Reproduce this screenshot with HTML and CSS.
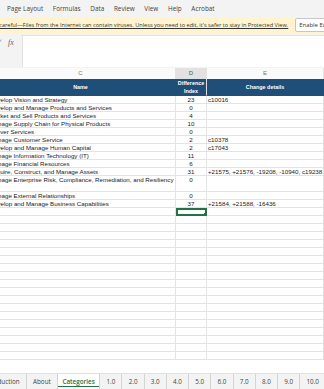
FILE: index.html
```html
<!DOCTYPE html>
<html lang="en">
<head>
    <meta charset="UTF-8">
    <title>Categories</title>
    <link rel="stylesheet" href="styles.css">
</head>
<body>

    <div class="menubar">
        <span>Page Layout</span>
        <span>Formulas</span>
        <span>Data</span>
        <span>Review</span>
        <span>View</span>
        <span>Help</span>
        <span>Acrobat</span>
    </div>

    <div class="msgbar">
        <span class="msg">Be careful—Files from the Internet can contain viruses. Unless you need to edit, it's safer to stay in Protected View.</span>
        <span class="enable">Enable Editing</span>
    </div>

    <div class="formula">
        <div class="fx-tools">
            <span class="check">✓</span>
            <span class="fx">fx</span>
        </div>
        <div class="fx-input"></div>
    </div>

    <div class="colheads">
        <div class="ch c">C</div>
        <div class="ch d">D</div>
        <div class="ch e">E</div>
    </div>

    <div class="sheet">
        <div class="row head">
            <div class="cell c">Name</div>
            <div class="cell d">Difference<br>Index</div>
            <div class="cell e">Change details</div>
        </div>
        <div class="row"><div class="cell c">Develop Vision and Strategy</div><div class="cell d">23</div><div class="cell e">c10016</div></div>
        <div class="row"><div class="cell c">Develop and Manage Products and Services</div><div class="cell d">0</div><div class="cell e"></div></div>
        <div class="row"><div class="cell c">Market and Sell Products and Services</div><div class="cell d">4</div><div class="cell e"></div></div>
        <div class="row"><div class="cell c">Manage Supply Chain for Physical Products</div><div class="cell d">10</div><div class="cell e"></div></div>
        <div class="row"><div class="cell c">Deliver Services</div><div class="cell d">0</div><div class="cell e"></div></div>
        <div class="row"><div class="cell c">Manage Customer Service</div><div class="cell d">2</div><div class="cell e">c10378</div></div>
        <div class="row"><div class="cell c">Develop and Manage Human Capital</div><div class="cell d">2</div><div class="cell e">c17043</div></div>
        <div class="row"><div class="cell c">Manage Information Technology (IT)</div><div class="cell d">11</div><div class="cell e"></div></div>
        <div class="row"><div class="cell c">Manage Financial Resources</div><div class="cell d">6</div><div class="cell e"></div></div>
        <div class="row"><div class="cell c">Acquire, Construct, and Manage Assets</div><div class="cell d">31</div><div class="cell e">+21575, +21576, -19208, -10940, c19238</div></div>
        <div class="row tall"><div class="cell c">Manage Enterprise Risk, Compliance, Remediation, and Resiliency</div><div class="cell d">0</div><div class="cell e"></div></div>
        <div class="row"><div class="cell c">Manage External Relationships</div><div class="cell d">0</div><div class="cell e"></div></div>
        <div class="row"><div class="cell c">Develop and Manage Business Capabilities</div><div class="cell d">37</div><div class="cell e">+21584, +21588, -16436</div></div>
        <div class="row"><div class="cell c"></div><div class="cell d selected"></div><div class="cell e"></div></div>
        <div class="row"><div class="cell c"></div><div class="cell d"></div><div class="cell e"></div></div>
        <div class="row"><div class="cell c"></div><div class="cell d"></div><div class="cell e"></div></div>
        <div class="row"><div class="cell c"></div><div class="cell d"></div><div class="cell e"></div></div>
        <div class="row"><div class="cell c"></div><div class="cell d"></div><div class="cell e"></div></div>
        <div class="row"><div class="cell c"></div><div class="cell d"></div><div class="cell e"></div></div>
        <div class="row"><div class="cell c"></div><div class="cell d"></div><div class="cell e"></div></div>
        <div class="row"><div class="cell c"></div><div class="cell d"></div><div class="cell e"></div></div>
        <div class="row"><div class="cell c"></div><div class="cell d"></div><div class="cell e"></div></div>
        <div class="row"><div class="cell c"></div><div class="cell d"></div><div class="cell e"></div></div>
        <div class="row"><div class="cell c"></div><div class="cell d"></div><div class="cell e"></div></div>
        <div class="row"><div class="cell c"></div><div class="cell d"></div><div class="cell e"></div></div>
        <div class="row"><div class="cell c"></div><div class="cell d"></div><div class="cell e"></div></div>
        <div class="row"><div class="cell c"></div><div class="cell d"></div><div class="cell e"></div></div>
        <div class="row"><div class="cell c"></div><div class="cell d"></div><div class="cell e"></div></div>
        <div class="row"><div class="cell c"></div><div class="cell d"></div><div class="cell e"></div></div>
        <div class="row"><div class="cell c"></div><div class="cell d"></div><div class="cell e"></div></div>
        <div class="row"><div class="cell c"></div><div class="cell d"></div><div class="cell e"></div></div>
        <div class="row"><div class="cell c"></div><div class="cell d"></div><div class="cell e"></div></div>
    </div>

    <div class="tabs">
        <span class="tab first">Introduction</span>
        <span class="tab">About</span>
        <span class="tab active">Categories</span>
        <span class="tab">1.0</span>
        <span class="tab">2.0</span>
        <span class="tab">3.0</span>
        <span class="tab">4.0</span>
        <span class="tab">5.0</span>
        <span class="tab">6.0</span>
        <span class="tab">7.0</span>
        <span class="tab">8.0</span>
        <span class="tab">9.0</span>
        <span class="tab">10.0</span>
    </div>

</body>
</html>
```

FILE: styles.css
```css
body {
    margin: 0;
    height: 389px;
    display: flex;
    flex-direction: column;
    overflow: hidden;
    font-family: "Liberation Sans", Arial, sans-serif;
    background-color: #f3f3f3;
}
.menubar {
    height: 17px;
    flex-shrink: 0;
    display: flex;
    align-items: center;
    gap: 9.6px;
    padding-left: 7px;
    font-family: "Open Sans", sans-serif;
    font-size: 6.4px;
    color: #444;
    white-space: nowrap;
}
.msgbar {
    height: 16px;
    flex-shrink: 0;
    display: flex;
    align-items: center;
    background-color: #fff4ce;
    font-family: "Open Sans", sans-serif;
    font-size: 5.6px;
    color: #333;
    white-space: nowrap;
    overflow: hidden;
}
.msg {
    margin-left: -9px;
    text-decoration: underline;
}
.enable {
    margin-left: 7px;
    height: 12px;
    line-height: 12px;
    padding: 0 3px;
    background-color: #fff;
    border: 1px solid #c6c6c6;
    border-radius: 2px;
    color: #333;
    font-size: 5.9px;
}
.formula {
    height: 35px;
    flex-shrink: 0;
    display: flex;
    padding: 2px 0 1px;
    box-sizing: border-box;
}
.fx-tools {
    width: 22px;
    display: flex;
    align-items: flex-start;
    gap: 5px;
    padding-top: 3px;
    font-family: "Liberation Serif", serif;
    color: #666;
}
.check {
    font-size: 7px;
    margin-left: -3px;
    color: #999;
}
.fx {
    font-size: 8px;
    font-style: italic;
}
.fx-input {
    flex: 1;
    background-color: #fff;
    border-top: 1px solid #e2e2e2;
    border-left: 1px solid #e2e2e2;
}
.colheads,
.row {
    display: grid;
    grid-template-columns: 190px 31px 1fr;
    margin-left: -14px;
}
.colheads {
    height: 11px;
    flex-shrink: 0;
    font-size: 6px;
    color: #777;
    background-color: #fafafa;
}
.ch {
    text-align: center;
    line-height: 11px;
    border-right: 1px solid #e2e2e2;
    border-bottom: 1px solid #d6d6d6;
    box-sizing: border-box;
}
.ch.d {
    background-color: #e2e2e2;
    color: #217346;
    border-bottom: 1px solid #6fae8a;
}
.sheet {
    flex: 1;
    overflow: hidden;
    background-color: #fff;
}
.row {
    height: 8px;
    font-size: 6.2px;
    color: #222;
    white-space: nowrap;
}
.row.tall {
    height: 16px;
}
.cell {
    border-right: 1px solid #e3e3e3;
    border-bottom: 1px solid #e3e3e3;
    box-sizing: border-box;
    line-height: 7px;
    overflow: visible;
}
.cell.c {
    padding-left: 3.5px;
}
.cell.d {
    text-align: center;
    overflow: hidden;
    background-color: #fff;
}
.cell.e {
    padding-left: 1px;
}
.row.head {
    height: 17px;
    background-color: #1f4e79;
    color: #fff;
    font-weight: bold;
    font-size: 5.4px;
}
.row.head .cell {
    border-color: #1f4e79;
    display: flex;
    align-items: center;
    justify-content: center;
    text-align: center;
    line-height: 8.5px;
    padding: 0;
}
.row.head .cell.d {
    background-color: #1f4e79;
    border-right: 1px solid #dcdcdc;
}
.cell.selected {
    border: 2px solid #217346;
    position: relative;
}
.cell.selected::after {
    content: "";
    position: absolute;
    right: -3px;
    bottom: -3px;
    width: 3px;
    height: 3px;
    background-color: #217346;
    border: 1px solid #fff;
}
.tabs {
    height: 16px;
    flex-shrink: 0;
    display: flex;
    align-items: stretch;
    font-family: "Open Sans", sans-serif;
    font-size: 6.3px;
    color: #444;
    white-space: nowrap;
    background-color: #f3f3f3;
    border-top: 1px solid #e0e0e0;
    box-sizing: border-box;
}
.tab {
    display: flex;
    align-items: center;
    padding: 0 6.2px;
    border-right: 1px solid #d4d4d4;
}
.tab.first {
    margin-left: -23px;
}
.tab.active {
    background-color: #fff;
    color: #217346;
    font-weight: 600;
    padding: 0 4.5px;
    box-shadow: inset 0 -2px 0 #fff, inset 0 -3px 0 #217346;
}
```
